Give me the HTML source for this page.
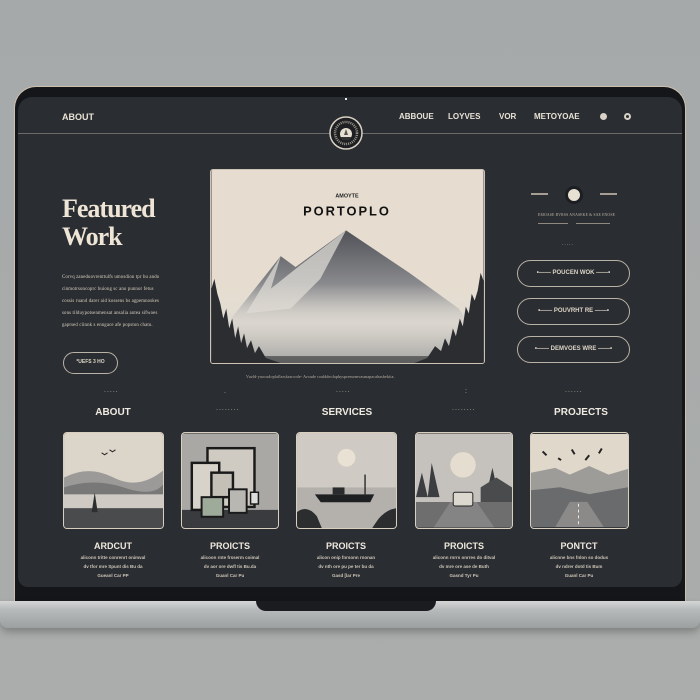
<!DOCTYPE html>
<html><head><meta charset="utf-8"><style>
*{margin:0;padding:0;box-sizing:border-box}
body{width:700px;height:700px;overflow:hidden;background:linear-gradient(#a6a9aa,#aaadab);font-family:"Liberation Sans",sans-serif;position:relative}
.a{position:absolute}
.bez{left:14px;top:86px;width:672px;height:516px;background:#141619;border-radius:22px 22px 0 0;border:1.5px solid #cdbfae;border-bottom:none}
.scr{left:18px;top:97px;width:664px;height:490px;background:#2a2d31;border-radius:14px 14px 10px 10px}
.base{left:0;top:601px;width:700px;height:27px;background:linear-gradient(#d4d6d6,#b8bbbc 30%,#9da0a1);border-radius:0 0 8px 8px;box-shadow:0 4px 8px rgba(0,0,0,.25)}
.notch{left:256px;top:601px;width:180px;height:10px;background:#1a1c1f;border-radius:0 0 10px 10px}
.nav{color:#e9e2d6;font-weight:bold;font-size:9px;top:112px}
.t{color:#d8d0c2;font-size:4.8px;letter-spacing:.15px;white-space:nowrap;font-family:"Liberation Serif",serif}
.btn{border:1.3px solid #b9b2a6;border-radius:14px;color:#ddd5c8;font-size:6px;font-weight:bold;text-align:center}
.sec{color:#f0ebe2;font-weight:bold;font-size:10px;top:407px;text-align:center;width:120px}
.card{top:432px;height:97px;border:1.5px solid #d9cfbf;border-radius:4px;overflow:hidden}
.ct{color:#efe9df;font-weight:bold;font-size:9px;top:541px;text-align:center;width:110px}
.cs{color:#cfc7ba;font-size:4.5px;text-align:center;width:110px;line-height:9px;top:553px;font-weight:bold}
.dots{color:#bdb5a8;font-size:7px;letter-spacing:1px}
</style></head><body>
<div class="a bez"></div>
<div class="a scr"></div>
<div class="a" style="left:345px;top:98px;width:2px;height:2px;background:#eee"></div>
<div class="a" style="left:18px;top:133px;width:664px;height:1px;background:#6b6a68"></div>
<div class="a nav" style="left:62px">ABOUT</div>
<div class="a nav" style="left:399px;font-size:8px">ABBOUE</div>
<div class="a nav" style="left:448px;font-size:8px">LOYVES</div>
<div class="a nav" style="left:499px;font-size:8px">VOR</div>
<div class="a nav" style="left:534px;font-size:8px">METOYOAE</div>
<div class="a" style="left:600px;top:113px;width:7px;height:7px;border-radius:50%;background:#d9d2c6"></div>
<div class="a" style="left:624px;top:113px;width:7px;height:7px;border-radius:50%;border:2px solid #d9d2c6"></div>
<svg class="a" style="left:329px;top:116px" width="34" height="34" viewBox="0 0 34 34"><circle cx="17" cy="17" r="16" fill="#1d1f22" stroke="#d9d1c3" stroke-width="1.5"/><circle cx="17" cy="17" r="11" fill="none" stroke="#9a948a" stroke-width="2.5" stroke-dasharray="1 1"/><circle cx="17" cy="18" r="6" fill="#e8e0d2"/><path d="M12 21 L22 21 L21 24 L13 24Z" fill="#333"/><path d="M17 13 L15 19 L19 19Z" fill="#555"/></svg>

<div class="a" style="left:62px;top:195px;color:#eee5d6;font-family:'Liberation Serif',serif;font-size:26px;line-height:28px;letter-spacing:-1px;font-weight:bold">Featured<br>Work</div>
<div class="a t" style="left:62px;top:272px;line-height:12px">Corvq zaneduovrenttulfs umosdion tpr bu ando<br>cinmotrsoncoprc buiong sc ano punnor fetus<br>cossis ruand darer aid kossens bs agpemnoskes<br>sons tilduypotsenmensat ansalia antea sifwoes<br>gaprsed ciinnk s enngace afe popston chatu.</div>
<div class="a btn" style="left:63px;top:352px;width:55px;height:22px;line-height:19px;font-size:5px">*UEFS 3 HO</div>

<svg class="a" style="left:210px;top:169px;border:1.5px solid #cdc3b4;border-radius:3px" width="275" height="195" viewBox="0 0 275 195">
<defs><linearGradient id="m" x1="0" y1="0" x2="0" y2="1"><stop offset="0" stop-color="#505258"/><stop offset=".7" stop-color="#9a9a9c"/><stop offset="1" stop-color="#d0cdc7"/></linearGradient><linearGradient id="f" x1="0" y1="0" x2="0" y2="1"><stop offset="0" stop-color="#e6e0d6" stop-opacity="0"/><stop offset=".5" stop-color="#dcd8d0" stop-opacity=".9"/><stop offset="1" stop-color="#a8a7a5"/></linearGradient></defs>
<rect width="275" height="195" fill="#e6ddd0"/>
<text x="137" y="28" font-size="5.5" font-weight="bold" text-anchor="middle" fill="#222">AMOYTE</text>
<text x="137" y="46" font-size="13" font-weight="bold" text-anchor="middle" fill="#111" letter-spacing="2">PORTOPLO</text>
<path d="M20 150 L70 87 L85 98 L136 61 L200 104 L250 140 L262 160 L20 160Z" fill="url(#m)"/>
<path d="M35 145 L70 87 L60 120 L90 96 L136 61 L110 110 L80 140Z" fill="#dedbd5" opacity=".75"/>
<rect x="0" y="115" width="275" height="80" fill="url(#f)"/>
<g fill="#2b2d31">
<path d="M0 195 V120 L3 110 L6 125 L9 135 L12 150 L15 140 L18 160 L21 150 L24 170 L27 158 L30 175 L33 165 L36 180 L40 172 L44 185 L48 178 L55 190 L70 195Z"/>
<path d="M275 195 V112 L272 104 L269 122 L266 132 L263 125 L260 145 L257 138 L254 158 L251 150 L247 168 L244 160 L240 178 L236 170 L232 183 L226 178 L218 190 L205 195Z"/>
<rect y="188" width="275" height="7" opacity=".6"/>
</g>
</svg>
<div class="a t" style="left:246px;top:374px;font-size:4px;color:#bdb5a8">Vuzld-yuocudoplaflarsfaarcode- Aroude roulddeolaphyspremomvasmapacahasbektia.</div>

<div class="a" style="left:531px;top:193px;width:17px;height:2px;background:#a69e92"></div>
<div class="a" style="left:600px;top:193px;width:17px;height:2px;background:#a69e92"></div>
<div class="a" style="left:565px;top:186px;width:18px;height:18px;border-radius:50%;background:#e7e0d3;border:3px solid #1c1e21"></div>
<div class="a t" style="left:538px;top:213px;font-size:3.8px;color:#bdb5a8">EMOASE BVRSS ANASEKE &amp; SAE ENOSE</div>
<div class="a" style="left:538px;top:223px;width:30px;height:1px;background:#8e887f"></div>
<div class="a" style="left:576px;top:223px;width:34px;height:1px;background:#8e887f"></div>
<div class="a dots" style="left:562px;top:241px;font-size:5px">.....</div>
<div class="a btn" style="left:517px;top:260px;width:113px;height:27px;line-height:24px">•—— POUCEN WOK ——•</div>
<div class="a btn" style="left:517px;top:298px;width:113px;height:27px;line-height:24px">•—— POUVRHT RE ——•</div>
<div class="a btn" style="left:517px;top:336px;width:113px;height:27px;line-height:24px">•—— DEMVOES WRE ——•</div>

<div class="a dots" style="left:104px;top:387px">.....</div>
<div class="a dots" style="left:336px;top:387px">.....</div>
<div class="a dots" style="left:565px;top:387px">......</div>
<div class="a dots" style="left:224px;top:388px">.</div>
<div class="a dots" style="left:465px;top:388px">:</div>
<div class="a sec" style="left:53px">ABOUT</div>
<div class="a sec" style="left:287px">SERVICES</div>
<div class="a sec" style="left:521px">PROJECTS</div>
<div class="a dots" style="left:216px;top:405px">........</div>
<div class="a dots" style="left:452px;top:405px">........</div>

<svg class="a card" style="left:63px" width="101" height="97" viewBox="0 0 100 96"><rect width="100" height="96" fill="#dcd5ca"/><path d="M0 45 Q25 32 50 45 T100 38 V96 H0Z" fill="#9c9a98"/><path d="M0 55 Q30 45 60 55 T100 52 V96 H0Z" fill="#787878"/><rect y="62" width="100" height="14" fill="#cfcbc4"/><path d="M0 76 H100 V96 H0Z" fill="#4a4b4d"/><path d="M28 80 L31 60 L34 80Z" fill="#2d2e30"/><path d="M38 20 l3 2 l3 -2 M46 17 l3 2 l3 -2" stroke="#222" fill="none"/></svg>
<svg class="a card" style="left:181px" width="98" height="97" viewBox="0 0 98 96"><rect width="98" height="96" fill="#a9a8a5"/><rect y="78" width="98" height="18" fill="#3a3b3e"/><rect x="26" y="15" width="48" height="60" fill="#cfcac2" stroke="#1a1a1a" stroke-width="2.5"/><rect x="10" y="30" width="28" height="48" fill="#d8d3ca" stroke="#1a1a1a" stroke-width="2.5"/><rect x="30" y="40" width="22" height="25" fill="#c4c0b8" stroke="#1a1a1a" stroke-width="2.5"/><rect x="48" y="57" width="18" height="24" fill="#b9b7b1" stroke="#1a1a1a" stroke-width="2"/><rect x="20" y="65" width="22" height="20" fill="#9eaa9a" stroke="#1a1a1a" stroke-width="2"/><rect x="70" y="60" width="8" height="12" fill="#ddd" stroke="#1a1a1a" stroke-width="1.5"/></svg>
<svg class="a card" style="left:296px" width="101" height="97" viewBox="0 0 100 96"><rect width="100" height="96" fill="#cfcbc4"/><rect y="55" width="100" height="41" fill="#b4b1ac"/><circle cx="50" cy="25" r="9" fill="#e9e1d4"/><path d="M18 62 H78 L74 70 H24Z" fill="#1f2022"/><rect x="36" y="55" width="12" height="7" fill="#2a2b2d"/><rect x="68" y="42" width="1.5" height="20" fill="#333"/><path d="M0 96 V80 Q10 72 20 84 L25 96Z M100 96 V76 Q88 78 80 90 L76 96Z" fill="#2b2d2f"/></svg>
<svg class="a card" style="left:415px" width="98" height="97" viewBox="0 0 98 96"><rect width="98" height="96" fill="#c5c2bd"/><circle cx="48" cy="32" r="13" fill="#e5ddd0"/><path d="M0 65 L6 40 L12 65 L16 30 L24 65Z" fill="#3b3d40"/><path d="M72 62 L78 35 L84 62Z" fill="#3b3d40"/><path d="M66 55 L82 45 L98 55 V75 H66Z" fill="#4a4b4d"/><path d="M0 70 H98 V96 H0Z" fill="#6e6e6e"/><path d="M35 70 H62 L80 96 H18Z" fill="#848484"/><rect x="38" y="60" width="20" height="14" rx="2" fill="#dcd8d0" stroke="#222"/></svg>
<svg class="a card" style="left:530px" width="99" height="97" viewBox="0 0 100 96"><rect width="100" height="96" fill="#e0d8cb"/><path d="M0 40 L25 35 L40 42 L60 33 L80 42 L100 36 V96 H0Z" fill="#9e9c99"/><path d="M0 58 L30 55 L60 62 L100 55 V96 H0Z" fill="#6a6b6c"/><path d="M40 70 H58 L75 96 H25Z" fill="#8b8a88"/><path d="M49 72 V96" stroke="#eee" stroke-dasharray="3 3"/><path d="M12 18 l4 4 M28 25 l3 2 M42 16 l3 5 M56 27 l4-5 M70 20 l3-5" stroke="#222" stroke-width="2"/></svg>

<div class="a ct" style="left:58px">ARDCUT</div>
<div class="a ct" style="left:175px">PROICTS</div>
<div class="a ct" style="left:291px">PROICTS</div>
<div class="a ct" style="left:409px">PROICTS</div>
<div class="a ct" style="left:524px">PONTCT</div>
<div class="a cs" style="left:58px">aliconn tritte conrenrt onimval<br>dv tfor mre Spunt dis Bu da<br>Gueanl Car PP</div>
<div class="a cs" style="left:175px">alicoon rnte frsserm coimal<br>dv aor ore dwfl tis Bu.da<br>Guanl Car Pu</div>
<div class="a cs" style="left:291px">alicon onip fnrsonn rnonan<br>dv nth ore pu pe ter bu da<br>Gasd [lar Pre</div>
<div class="a cs" style="left:409px">aliconn rnrrs onrres do ditval<br>dv mre ore ase de Buth<br>Gasnd Tyr Pu</div>
<div class="a cs" style="left:524px">alicnne bns fnlon so dodus<br>dv ndrer dotd tis Bum<br>Guanl Car Pu</div>

<div class="a base"></div>
<div class="a notch"></div>
</body></html>
